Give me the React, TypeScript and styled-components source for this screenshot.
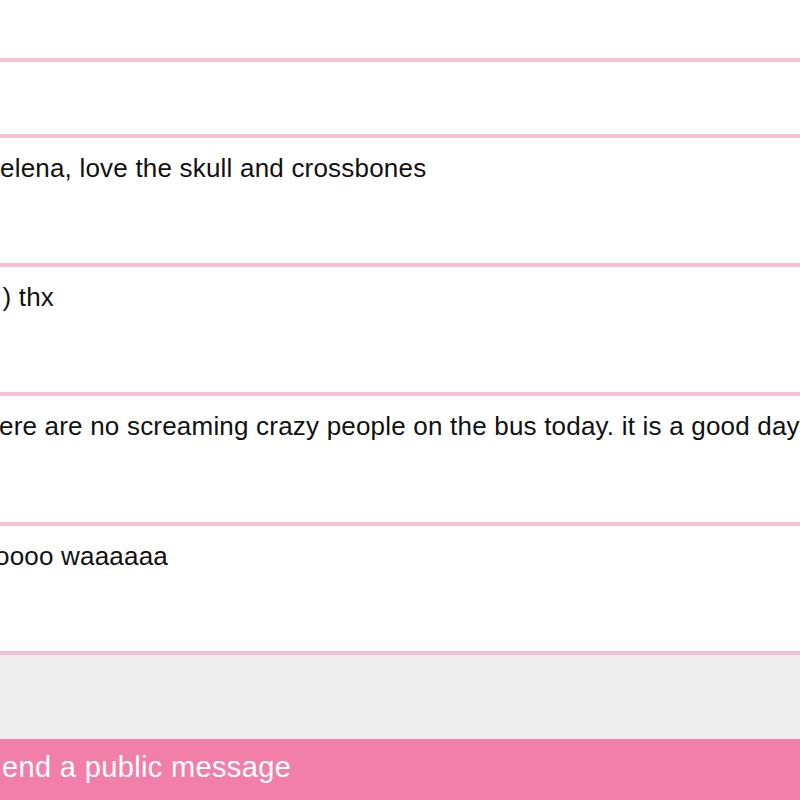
import styled, { createGlobalStyle } from 'styled-components'

const GlobalStyle = createGlobalStyle`
  html, body {
    margin: 0;
    padding: 0;
    background: #ffffff;
    overflow: hidden;
  }
  body {
    font-family: "Liberation Sans", Arial, sans-serif;
  }
`

const Wrapper = styled.div`
  width: 800px;
  height: 800px;
  display: flex;
  flex-direction: column;
  background: #ffffff;
  overflow: hidden;
`

const TopSpace = styled.div`
  height: 58px;
  flex-shrink: 0;
`

const MessageList = styled.ul`
  list-style: none;
  margin: 0;
  padding: 0;
  display: flex;
  flex-direction: column;
`

const MessageRow = styled.li<{ $h: number }>`
  height: ${p => p.$h}px;
  flex-shrink: 0;
  border-top: 4px solid #f6bfd6;
  box-sizing: content-box;
  padding: 0;
  overflow: hidden;
`

const MessageText = styled.p<{ $shift: number }>`
  margin: 0;
  padding-top: 15px;
  font-size: 26px;
  line-height: 30px;
  letter-spacing: 0.2px;
  color: #111111;
  white-space: nowrap;
  text-indent: ${p => p.$shift}px;
`

const Composer = styled.div`
  height: 84px;
  flex-shrink: 0;
  background: #eeeeee;
  border-top: 4px solid #f6bfd6;
`

const SendBar = styled.button`
  flex: 1;
  display: flex;
  align-items: flex-start;
  margin: 0;
  padding: 12px 0 0 2px;
  border: none;
  background: #f27fa9;
  color: #ffffff;
  font-family: "Liberation Sans", Arial, sans-serif;
  font-size: 29px;
  line-height: 33px;
  letter-spacing: 0.35px;
  text-align: left;
  white-space: nowrap;
  cursor: pointer;
`

const messages = [
  { text: '', shift: 0, h: 72 },
  { text: 'elena, love the skull and crossbones', shift: 0, h: 125 },
  { text: ':) thx', shift: -5, h: 125 },
  { text: 'ere are no screaming crazy people on the bus today. it is a good day', shift: -1, h: 126 },
  { text: 'oooo waaaaaa', shift: -5, h: 125 },
]

const App = () => {
  return (
    <Wrapper>
      <GlobalStyle />
      <TopSpace />
      <MessageList>
        {messages.map((m, i) => (
          <MessageRow key={i} $h={m.h}>
            {m.text && <MessageText $shift={m.shift}>{m.text}</MessageText>}
          </MessageRow>
        ))}
      </MessageList>
      <Composer />
      <SendBar>end a public message</SendBar>
    </Wrapper>
  )
}

export default App
